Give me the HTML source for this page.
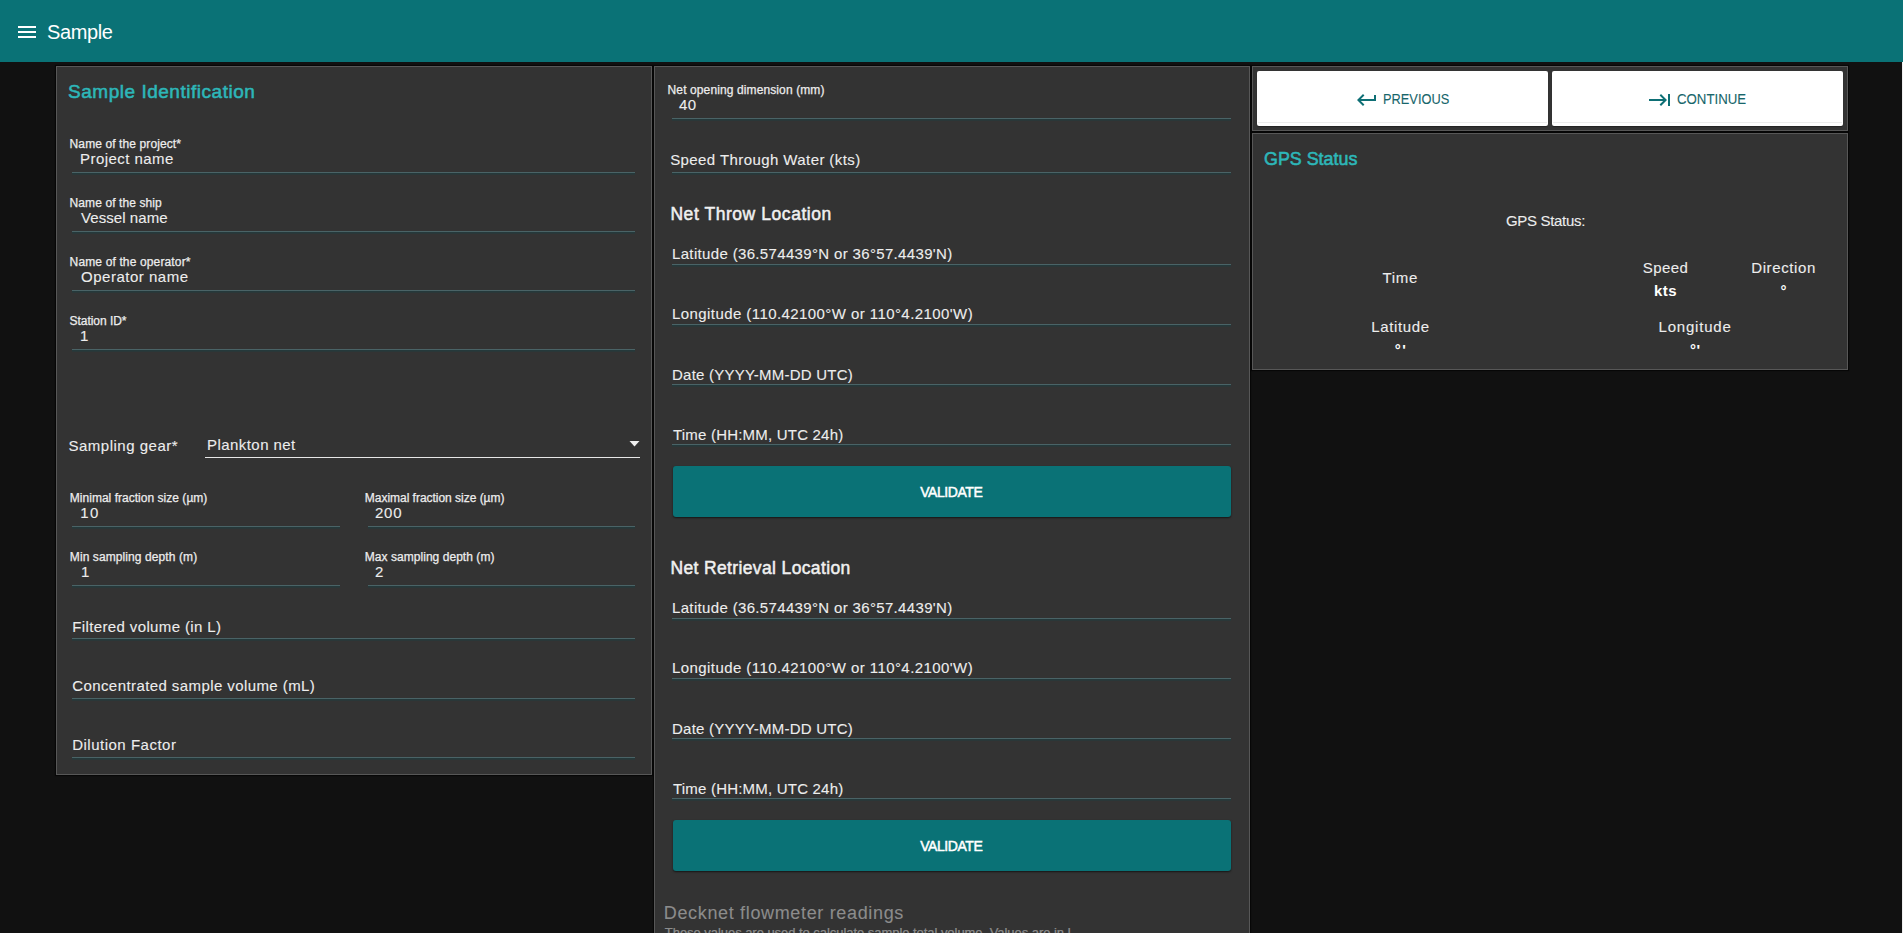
<!DOCTYPE html>
<html><head><meta charset="utf-8"><title>Sample</title>
<style>
html,body{margin:0;padding:0;}
body{width:1903px;height:933px;overflow:hidden;background:#111111;position:relative;font-family:"Liberation Sans",sans-serif;}
.t{position:absolute;white-space:nowrap;}
.r{position:absolute;}
</style></head><body>
<div class="r" style="left:0px;top:0px;width:1903px;height:62px;background:#0a7276;"></div>
<div class="r" style="left:1902px;top:62px;width:1px;height:871px;background:#f0f0f0;"></div>
<div class="r" style="left:18px;top:26px;width:18px;height:2px;background:#ffffff;"></div>
<div class="r" style="left:18px;top:31px;width:18px;height:2px;background:#ffffff;"></div>
<div class="r" style="left:18px;top:36px;width:18px;height:2px;background:#ffffff;"></div>
<div class="r" style="left:56px;top:66px;width:596px;height:709px;background:#333333;box-sizing:border-box;border:1px solid #575757;box-shadow:0 0 1px 1px rgba(0,0,0,.55);"></div>
<div class="r" style="left:654px;top:66px;width:596px;height:900px;background:#333333;box-sizing:border-box;border:1px solid #575757;box-shadow:0 0 1px 1px rgba(0,0,0,.55);"></div>
<div class="r" style="left:1252px;top:66px;width:596px;height:65px;background:#333333;box-sizing:border-box;border:1px solid #575757;box-shadow:0 0 1px 1px rgba(0,0,0,.55);"></div>
<div class="r" style="left:1252px;top:133px;width:596px;height:237px;background:#333333;box-sizing:border-box;border:1px solid #575757;box-shadow:0 0 1px 1px rgba(0,0,0,.55);"></div>
<div class="r" style="left:72px;top:172px;width:563px;height:1px;background:#4a6366;box-shadow:0 1px 0 #25393b,0 2px 0 #2a3738;"></div>
<div class="r" style="left:72px;top:231px;width:563px;height:1px;background:#4a6366;box-shadow:0 1px 0 #25393b,0 2px 0 #2a3738;"></div>
<div class="r" style="left:72px;top:290px;width:563px;height:1px;background:#4a6366;box-shadow:0 1px 0 #25393b,0 2px 0 #2a3738;"></div>
<div class="r" style="left:72px;top:349px;width:563px;height:1px;background:#4a6366;box-shadow:0 1px 0 #25393b,0 2px 0 #2a3738;"></div>
<div class="r" style="left:72px;top:526px;width:268px;height:1px;background:#4a6366;box-shadow:0 1px 0 #25393b,0 2px 0 #2a3738;"></div>
<div class="r" style="left:368px;top:526px;width:267px;height:1px;background:#4a6366;box-shadow:0 1px 0 #25393b,0 2px 0 #2a3738;"></div>
<div class="r" style="left:72px;top:585px;width:268px;height:1px;background:#4a6366;box-shadow:0 1px 0 #25393b,0 2px 0 #2a3738;"></div>
<div class="r" style="left:368px;top:585px;width:267px;height:1px;background:#4a6366;box-shadow:0 1px 0 #25393b,0 2px 0 #2a3738;"></div>
<div class="r" style="left:72px;top:638px;width:563px;height:1px;background:#4a6366;box-shadow:0 1px 0 #25393b,0 2px 0 #2a3738;"></div>
<div class="r" style="left:72px;top:698px;width:563px;height:1px;background:#4a6366;box-shadow:0 1px 0 #25393b,0 2px 0 #2a3738;"></div>
<div class="r" style="left:72px;top:757px;width:563px;height:1px;background:#4a6366;box-shadow:0 1px 0 #25393b,0 2px 0 #2a3738;"></div>
<div class="r" style="left:205px;top:457px;width:435px;height:1px;background:#e6e6e6;"></div>
<svg class="r" style="left:629px;top:440px" width="11" height="7" viewBox="0 0 11 7"><path d="M0.5 1 L10.5 1 L5.5 6.5 Z" fill="#f0f0f0"/></svg>
<div class="r" style="left:672px;top:118px;width:559px;height:1px;background:#4a6366;box-shadow:0 1px 0 #25393b,0 2px 0 #2a3738;"></div>
<div class="r" style="left:672px;top:172px;width:559px;height:1px;background:#4a6366;box-shadow:0 1px 0 #25393b,0 2px 0 #2a3738;"></div>
<div class="r" style="left:672px;top:264px;width:559px;height:1px;background:#4a6366;box-shadow:0 1px 0 #25393b,0 2px 0 #2a3738;"></div>
<div class="r" style="left:672px;top:324px;width:559px;height:1px;background:#4a6366;box-shadow:0 1px 0 #25393b,0 2px 0 #2a3738;"></div>
<div class="r" style="left:672px;top:384px;width:559px;height:1px;background:#4a6366;box-shadow:0 1px 0 #25393b,0 2px 0 #2a3738;"></div>
<div class="r" style="left:672px;top:444px;width:559px;height:1px;background:#4a6366;box-shadow:0 1px 0 #25393b,0 2px 0 #2a3738;"></div>
<div class="r" style="left:673px;top:466px;width:558px;height:51px;background:#0a7276;border-radius:3px;box-shadow:0 1px 2px rgba(0,0,0,.6);"></div>
<div class="r" style="left:672px;top:618px;width:559px;height:1px;background:#4a6366;box-shadow:0 1px 0 #25393b,0 2px 0 #2a3738;"></div>
<div class="r" style="left:672px;top:678px;width:559px;height:1px;background:#4a6366;box-shadow:0 1px 0 #25393b,0 2px 0 #2a3738;"></div>
<div class="r" style="left:672px;top:738px;width:559px;height:1px;background:#4a6366;box-shadow:0 1px 0 #25393b,0 2px 0 #2a3738;"></div>
<div class="r" style="left:672px;top:798px;width:559px;height:1px;background:#4a6366;box-shadow:0 1px 0 #25393b,0 2px 0 #2a3738;"></div>
<div class="r" style="left:673px;top:820px;width:558px;height:51px;background:#0a7276;border-radius:3px;box-shadow:0 1px 2px rgba(0,0,0,.6);"></div>
<div class="r" style="left:1257px;top:71px;width:291px;height:55px;background:#ffffff;border-radius:2px;box-shadow:0 1px 1px rgba(0,0,0,.35);"></div>
<div class="r" style="left:1552px;top:71px;width:291px;height:55px;background:#ffffff;border-radius:2px;box-shadow:0 1px 1px rgba(0,0,0,.35);"></div>
<div class="r" style="left:1258px;top:122px;width:289px;height:1px;background:#ececec;"></div>
<div class="r" style="left:1553px;top:122px;width:289px;height:1px;background:#ececec;"></div>
<svg class="r" style="left:1355px;top:88px" width="24" height="24" viewBox="0 0 24 24"><path fill="#0e6f75" d="M19 7v4H5.83l3.58-3.59L8 6l-6 6 6 6 1.41-1.41L5.83 13H21V7z"/></svg>
<svg class="r" style="left:1648px;top:88px" width="24" height="24" viewBox="0 0 24 24"><path fill="#0e6f75" d="M11.59 7.41L15.17 11H1v2h14.17l-3.59 3.59L13 18l6-6-6-6-1.41 1.41zM20 6v12h2V6h-2z"/></svg>
<div class="t" id="t0" style="left:47.00px;top:22.00px;font-size:20px;line-height:20px;font-weight:400;color:#ffffff;letter-spacing:-0.400px;">Sample</div>
<div class="t" id="t1" style="left:68.00px;top:82.00px;font-size:19px;line-height:19px;font-weight:400;color:#2db7b9;letter-spacing:0.525px;-webkit-text-stroke:0.55px currentColor;">Sample Identification</div>
<div class="t" id="t2" style="left:69.60px;top:138.00px;font-size:12px;line-height:12px;font-weight:400;color:#ededed;letter-spacing:0.105px;-webkit-text-stroke:0.25px currentColor;">Name of the project*</div>
<div class="t" id="t3" style="left:80.00px;top:151.00px;font-size:15px;line-height:15px;font-weight:400;color:#ededed;letter-spacing:0.445px;-webkit-text-stroke:0.1px currentColor;">Project name</div>
<div class="t" id="t4" style="left:69.60px;top:197.00px;font-size:12px;line-height:12px;font-weight:400;color:#ededed;letter-spacing:0.093px;-webkit-text-stroke:0.25px currentColor;">Name of the ship</div>
<div class="t" id="t5" style="left:81.00px;top:210.00px;font-size:15px;line-height:15px;font-weight:400;color:#ededed;letter-spacing:0.070px;-webkit-text-stroke:0.1px currentColor;">Vessel name</div>
<div class="t" id="t6" style="left:69.60px;top:256.00px;font-size:12px;line-height:12px;font-weight:400;color:#ededed;letter-spacing:0.140px;-webkit-text-stroke:0.25px currentColor;">Name of the operator*</div>
<div class="t" id="t7" style="left:81.00px;top:269.00px;font-size:15px;line-height:15px;font-weight:400;color:#ededed;letter-spacing:0.508px;-webkit-text-stroke:0.1px currentColor;">Operator name</div>
<div class="t" id="t8" style="left:69.60px;top:315.00px;font-size:12px;line-height:12px;font-weight:400;color:#ededed;letter-spacing:-0.050px;-webkit-text-stroke:0.25px currentColor;">Station ID*</div>
<div class="t" id="t9" style="left:80.00px;top:328.00px;font-size:15px;line-height:15px;font-weight:400;color:#ededed;letter-spacing:0.000px;-webkit-text-stroke:0.1px currentColor;">1</div>
<div class="t" id="t10" style="left:68.40px;top:438.00px;font-size:15px;line-height:15px;font-weight:400;color:#ededed;letter-spacing:0.515px;-webkit-text-stroke:0.1px currentColor;">Sampling gear*</div>
<div class="t" id="t11" style="left:207.00px;top:437.00px;font-size:15px;line-height:15px;font-weight:400;color:#ededed;letter-spacing:0.445px;-webkit-text-stroke:0.1px currentColor;">Plankton net</div>
<div class="t" id="t12" style="left:69.80px;top:492.00px;font-size:12px;line-height:12px;font-weight:400;color:#ededed;letter-spacing:0.024px;-webkit-text-stroke:0.25px currentColor;">Minimal fraction size (µm)</div>
<div class="t" id="t13" style="left:80.20px;top:505.00px;font-size:15px;line-height:15px;font-weight:400;color:#ededed;letter-spacing:1.500px;-webkit-text-stroke:0.1px currentColor;">10</div>
<div class="t" id="t14" style="left:364.80px;top:492.00px;font-size:12px;line-height:12px;font-weight:400;color:#ededed;letter-spacing:-0.024px;-webkit-text-stroke:0.25px currentColor;">Maximal fraction size (µm)</div>
<div class="t" id="t15" style="left:375.00px;top:505.00px;font-size:15px;line-height:15px;font-weight:400;color:#ededed;letter-spacing:0.750px;-webkit-text-stroke:0.1px currentColor;">200</div>
<div class="t" id="t16" style="left:69.80px;top:551.00px;font-size:12px;line-height:12px;font-weight:400;color:#ededed;letter-spacing:0.095px;-webkit-text-stroke:0.25px currentColor;">Min sampling depth (m)</div>
<div class="t" id="t17" style="left:81.00px;top:564.00px;font-size:15px;line-height:15px;font-weight:400;color:#ededed;letter-spacing:0.000px;-webkit-text-stroke:0.1px currentColor;">1</div>
<div class="t" id="t18" style="left:364.80px;top:551.00px;font-size:12px;line-height:12px;font-weight:400;color:#ededed;letter-spacing:0.043px;-webkit-text-stroke:0.25px currentColor;">Max sampling depth (m)</div>
<div class="t" id="t19" style="left:375.00px;top:564.00px;font-size:15px;line-height:15px;font-weight:400;color:#ededed;letter-spacing:0.000px;-webkit-text-stroke:0.1px currentColor;">2</div>
<div class="t" id="t20" style="left:72.20px;top:619.00px;font-size:15px;line-height:15px;font-weight:400;color:#ededed;letter-spacing:0.381px;-webkit-text-stroke:0.1px currentColor;">Filtered volume (in L)</div>
<div class="t" id="t21" style="left:72.20px;top:678.00px;font-size:15px;line-height:15px;font-weight:400;color:#ededed;letter-spacing:0.417px;-webkit-text-stroke:0.1px currentColor;">Concentrated sample volume (mL)</div>
<div class="t" id="t22" style="left:72.20px;top:737.00px;font-size:15px;line-height:15px;font-weight:400;color:#ededed;letter-spacing:0.500px;-webkit-text-stroke:0.1px currentColor;">Dilution Factor</div>
<div class="t" id="t23" style="left:667.60px;top:84.00px;font-size:12px;line-height:12px;font-weight:400;color:#ededed;letter-spacing:0.112px;-webkit-text-stroke:0.25px currentColor;">Net opening dimension (mm)</div>
<div class="t" id="t24" style="left:679.00px;top:97.00px;font-size:15px;line-height:15px;font-weight:400;color:#ededed;letter-spacing:0.400px;-webkit-text-stroke:0.1px currentColor;">40</div>
<div class="t" id="t25" style="left:670.20px;top:152.00px;font-size:15px;line-height:15px;font-weight:400;color:#ededed;letter-spacing:0.413px;-webkit-text-stroke:0.1px currentColor;">Speed Through Water (kts)</div>
<div class="t" id="t26" style="left:670.40px;top:206.00px;font-size:17.5px;line-height:17.5px;font-weight:400;color:#f0f0f0;letter-spacing:0.559px;-webkit-text-stroke:0.5px currentColor;">Net Throw Location</div>
<div class="t" id="t27" style="left:672.00px;top:246.00px;font-size:15px;line-height:15px;font-weight:400;color:#ededed;letter-spacing:0.343px;-webkit-text-stroke:0.1px currentColor;">Latitude (36.574439°N or 36°57.4439'N)</div>
<div class="t" id="t28" style="left:672.00px;top:306.00px;font-size:15px;line-height:15px;font-weight:400;color:#ededed;letter-spacing:0.426px;-webkit-text-stroke:0.1px currentColor;">Longitude (110.42100°W or 110°4.2100'W)</div>
<div class="t" id="t29" style="left:672.00px;top:367.00px;font-size:15px;line-height:15px;font-weight:400;color:#ededed;letter-spacing:0.230px;-webkit-text-stroke:0.1px currentColor;">Date (YYYY-MM-DD UTC)</div>
<div class="t" id="t30" style="left:673.00px;top:427.00px;font-size:15px;line-height:15px;font-weight:400;color:#ededed;letter-spacing:0.205px;-webkit-text-stroke:0.1px currentColor;">Time (HH:MM, UTC 24h)</div>
<div class="t" id="t31" style="left:920.20px;top:485.00px;font-size:14px;line-height:14px;font-weight:400;color:#ffffff;letter-spacing:-0.429px;-webkit-text-stroke:0.5px currentColor;">VALIDATE</div>
<div class="t" id="t32" style="left:670.40px;top:560.00px;font-size:17.5px;line-height:17.5px;font-weight:400;color:#f0f0f0;letter-spacing:0.367px;-webkit-text-stroke:0.5px currentColor;">Net Retrieval Location</div>
<div class="t" id="t33" style="left:672.00px;top:600.00px;font-size:15px;line-height:15px;font-weight:400;color:#ededed;letter-spacing:0.343px;-webkit-text-stroke:0.1px currentColor;">Latitude (36.574439°N or 36°57.4439'N)</div>
<div class="t" id="t34" style="left:672.00px;top:660.00px;font-size:15px;line-height:15px;font-weight:400;color:#ededed;letter-spacing:0.426px;-webkit-text-stroke:0.1px currentColor;">Longitude (110.42100°W or 110°4.2100'W)</div>
<div class="t" id="t35" style="left:672.00px;top:721.00px;font-size:15px;line-height:15px;font-weight:400;color:#ededed;letter-spacing:0.230px;-webkit-text-stroke:0.1px currentColor;">Date (YYYY-MM-DD UTC)</div>
<div class="t" id="t36" style="left:673.00px;top:781.00px;font-size:15px;line-height:15px;font-weight:400;color:#ededed;letter-spacing:0.205px;-webkit-text-stroke:0.1px currentColor;">Time (HH:MM, UTC 24h)</div>
<div class="t" id="t37" style="left:920.20px;top:839.00px;font-size:14px;line-height:14px;font-weight:400;color:#ffffff;letter-spacing:-0.429px;-webkit-text-stroke:0.5px currentColor;">VALIDATE</div>
<div class="t" id="t38" style="left:663.80px;top:904.00px;font-size:18px;line-height:18px;font-weight:400;color:#8c8c8c;letter-spacing:0.656px;-webkit-text-stroke:0.1px currentColor;">Decknet flowmeter readings</div>
<div class="t" id="t39" style="left:664.80px;top:926.00px;font-size:13px;line-height:13px;font-weight:400;color:#8c8c8c;letter-spacing:-0.044px;-webkit-text-stroke:0.25px currentColor;">These values are used to calculate sample total volume. Values are in L</div>
<div class="t" id="t40" style="left:1383.10px;top:92.00px;font-size:14px;line-height:14px;font-weight:400;color:#17666b;letter-spacing:0.000px;-webkit-text-stroke:0.1px currentColor;transform:scaleX(0.915);transform-origin:0 0;">PREVIOUS</div>
<div class="t" id="t41" style="left:1676.70px;top:92.00px;font-size:14px;line-height:14px;font-weight:400;color:#17666b;letter-spacing:0.000px;-webkit-text-stroke:0.1px currentColor;transform:scaleX(0.945);transform-origin:0 0;">CONTINUE</div>
<div class="t" id="t42" style="left:1264.40px;top:149.00px;font-size:19px;line-height:19px;font-weight:400;color:#2db7b9;letter-spacing:0.000px;-webkit-text-stroke:0.6px currentColor;transform:scaleX(0.94);transform-origin:0 0;">GPS Status</div>
<div class="t" id="t43" style="left:1506.00px;top:213.00px;font-size:15px;line-height:15px;font-weight:400;color:#ededed;letter-spacing:-0.320px;-webkit-text-stroke:0.1px currentColor;">GPS Status:</div>
<div class="t" id="t44" style="left:1382.60px;top:270.00px;font-size:15px;line-height:15px;font-weight:400;color:#ededed;letter-spacing:0.667px;-webkit-text-stroke:0.1px currentColor;">Time</div>
<div class="t" id="t45" style="left:1642.80px;top:260.00px;font-size:15px;line-height:15px;font-weight:400;color:#ededed;letter-spacing:0.425px;-webkit-text-stroke:0.1px currentColor;">Speed</div>
<div class="t" id="t46" style="left:1654.00px;top:283.40px;font-size:15px;line-height:15px;font-weight:700;color:#ffffff;letter-spacing:0.400px;">kts</div>
<div class="t" id="t47" style="left:1751.20px;top:260.00px;font-size:15px;line-height:15px;font-weight:400;color:#ededed;letter-spacing:0.625px;-webkit-text-stroke:0.1px currentColor;">Direction</div>
<div class="t" id="t48" style="left:1371.20px;top:319.00px;font-size:15px;line-height:15px;font-weight:400;color:#ededed;letter-spacing:0.657px;-webkit-text-stroke:0.1px currentColor;">Latitude</div>
<div class="t" id="t49" style="left:1658.60px;top:319.00px;font-size:15px;line-height:15px;font-weight:400;color:#ededed;letter-spacing:0.787px;-webkit-text-stroke:0.1px currentColor;">Longitude</div>
<div class="t" id="t50" style="left:1394.70px;top:342.00px;font-size:15px;line-height:15px;font-weight:700;color:#ffffff;letter-spacing:1.600px;">°'</div>
<div class="t" id="t51" style="left:1689.90px;top:342.00px;font-size:15px;line-height:15px;font-weight:700;color:#ffffff;letter-spacing:0.600px;">°'</div>
<div class="t" id="t52" style="left:1780.60px;top:282.50px;font-size:15px;line-height:15px;font-weight:700;color:#ffffff;letter-spacing:0.000px;">°</div>
</body></html>
